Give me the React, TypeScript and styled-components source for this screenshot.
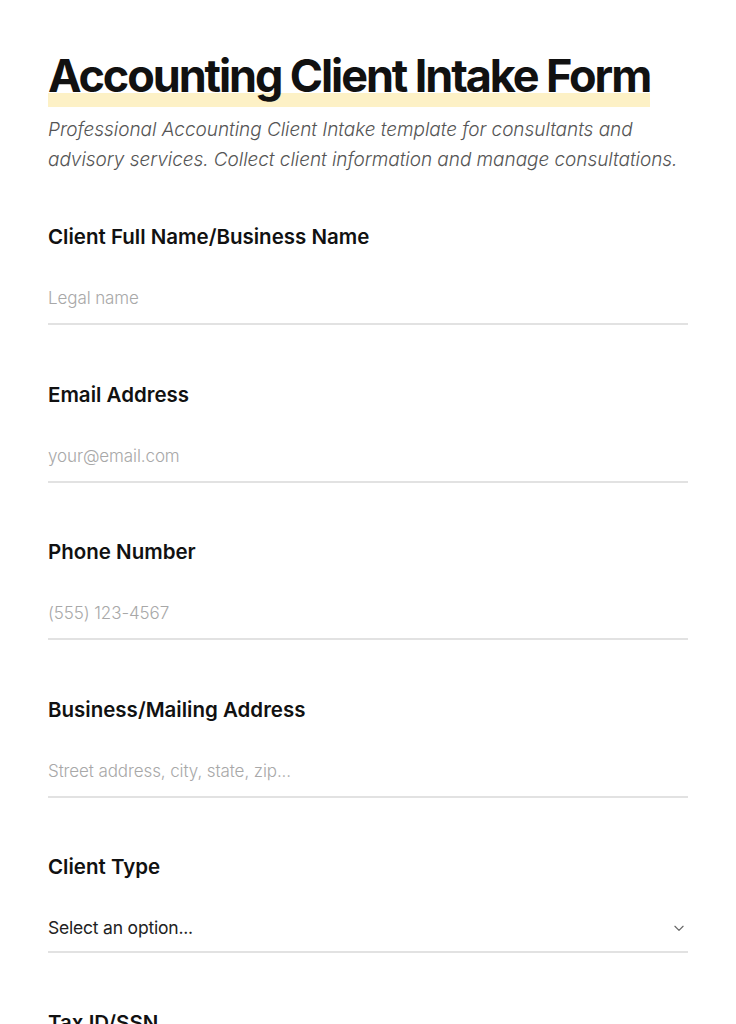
import styled, { createGlobalStyle } from "styled-components";

const GlobalStyle = createGlobalStyle`
  * { box-sizing: border-box; }
  body {
    margin: 0;
    background: #fff;
    font-family: "Inter", "Noto Sans", sans-serif;
    color: #111;
  }
`;

// ==================== 필드 정의 =================

const fields = [
  { label: "Client Full Name/Business Name", placeholder: "Legal name" },
  { label: "Email Address", placeholder: "your@email.com" },
  { label: "Phone Number", placeholder: "(555) 123-4567" },
  { label: "Business/Mailing Address", placeholder: "Street address, city, state, zip..." },
];

const App = () => {
  return (
    <>
      <GlobalStyle />
      <Page>
        <Header>
          <Title>
            <span>Accounting Client Intake Form</span>
          </Title>
          <Subtitle>
            Professional Accounting Client Intake template for consultants and advisory
            services. Collect client information and manage consultations.
          </Subtitle>
        </Header>

        {fields.map((f) => (
          <Field key={f.label}>
            <Label>{f.label}</Label>
            <Input placeholder={f.placeholder} />
          </Field>
        ))}

        <Field>
          <Label>Client Type</Label>
          <SelectWrap>
            <span>Select an option...</span>
            <svg width="14" height="14" viewBox="0 0 24 24" fill="none" stroke="#666" strokeWidth="2" strokeLinecap="round" strokeLinejoin="round">
              <path d="M5 9l7 7 7-7" />
            </svg>
          </SelectWrap>
        </Field>

        <Field>
          <Label>Tax ID/SSN</Label>
          <Input placeholder="XX-XXXXXXX" />
        </Field>
      </Page>
    </>
  );
};

export default App;

const Page = styled.main`
  width: 736px;
  padding: 50px 48px 80px;
  display: flex;
  flex-direction: column;
`;

const Header = styled.header`
  margin-bottom: 47px;
`;

const Title = styled.h1`
  margin: 0 0 13px;
  font-size: 45px;
  font-weight: 700;
  letter-spacing: -2.1px;
  line-height: 52px;

  // 형광펜 밑줄
  span {
    padding-bottom: 4px;
    background: linear-gradient(to bottom, transparent 76%, #fdf1c6 76%, #fdf1c6 100%);
  }
`;

const Subtitle = styled.p`
  margin: 0;
  max-width: 640px;
  font-size: 19px;
  font-style: italic;
  font-weight: 300;
  letter-spacing: -0.05px;
  line-height: 30px;
  color: #555;
`;

const Field = styled.div`
  display: flex;
  flex-direction: column;
  margin-bottom: 54.5px;
`;

const Label = styled.label`
  font-size: 20.5px;
  font-weight: 600;
  letter-spacing: 0;
  line-height: 30px;
  margin-bottom: 31px;
  color: #111;
`;

const Input = styled.input`
  border: none;
  border-bottom: 2px solid #e2e2e2;
  padding: 0 0 10px;
  font-family: inherit;
  font-size: 17px;
  font-weight: 300;
  letter-spacing: -0.1px;
  line-height: 30px;
  outline: none;
  color: #222;
  background: transparent;

  &::placeholder {
    color: #a8a8a8;
  }
`;

const SelectWrap = styled.div`
  display: flex;
  align-items: center;
  justify-content: space-between;
  border-bottom: 2px solid #e2e2e2;
  padding: 0 2px 8px 0;
  font-size: 17.5px;
  font-weight: 400;
  line-height: 30px;
  color: #222;
  letter-spacing: -0.2px;
`;
